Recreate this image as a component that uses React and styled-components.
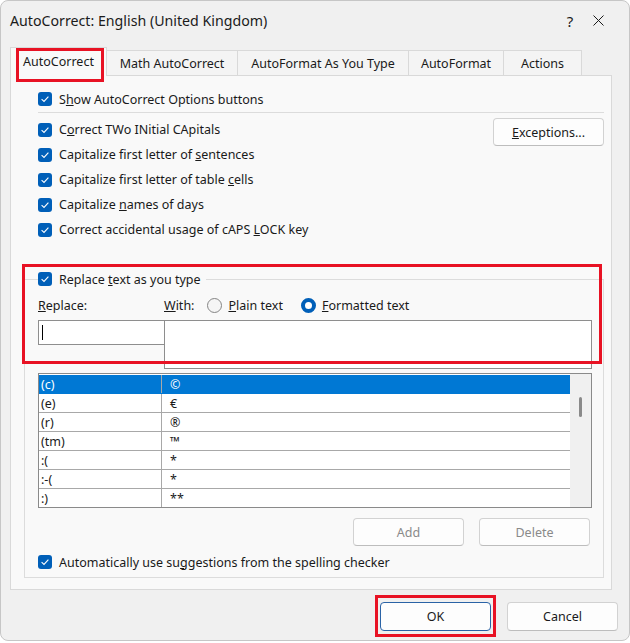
import React from "react";
import styled, { createGlobalStyle } from "styled-components";

const GlobalStyle = createGlobalStyle`
  body {
    margin: 0;
    background: #ffffff;
    font-family: "Noto Sans", "Open Sans", sans-serif;
  }
`;

const Window = styled.div`
  width: 630px;
  height: 641px;
  box-sizing: border-box;
  border: 1px solid #c6c6c6;
  border-radius: 8px;
  background: #f0f0f0;
  display: flex;
  flex-direction: column;
  overflow: hidden;
  color: #1a1a1a;
  font-size: 12.5px;
`;

const TitleBar = styled.div`
  height: 39px;
  display: flex;
  align-items: center;
  padding: 0 21px 0 9px;
`;

const Title = styled.div`
  flex: 1;
  font-size: 14.2px;
  color: #1b1b1b;
`;

const CaptionButton = styled.div`
  width: 20px;
  display: flex;
  justify-content: center;
  align-items: center;
  font-size: 15px;
  margin-left: 8px;
`;

const TabStrip = styled.div`
  display: flex;
  align-items: flex-end;
  height: 27px;
  margin-top: 8px;
  padding-left: 10px;
`;

const Tab = styled.div`
  position: relative;
  width: ${(p) => p.$w}px;
  height: ${(p) => (p.$active ? 29 : 25)}px;
  box-sizing: border-box;
  margin-left: -1px;
  margin-bottom: ${(p) => (p.$active ? -1 : 0)}px;
  z-index: ${(p) => (p.$active ? 2 : 0)};
  border: 1px solid #d9d9d9;
  border-bottom: none;
  background: ${(p) => (p.$active ? "#f9f9f9" : "#f4f4f4")};
  display: flex;
  align-items: center;
  justify-content: center;
  padding-bottom: ${(p) => (p.$active ? 2 : 0)}px;
  white-space: nowrap;
`;

const Mark = styled.div`
  position: absolute;
  box-sizing: border-box;
  border: 3px solid #e81224;
  pointer-events: none;
  z-index: 5;
`;

const Panel = styled.div`
  position: relative;
  margin-left: 9px;
  width: 602px;
  box-sizing: border-box;
  border: 1px solid #d9d9d9;
  background: #f9f9f9;
  padding: 11px 7px 11px 13px;
`;

const TopSection = styled.div`
  padding-left: 14px;
`;

const CheckRow = styled.label`
  display: flex;
  align-items: center;
  height: ${(p) => p.$h || 25}px;
  gap: 7px;
  white-space: nowrap;
`;

const Box = styled.span`
  width: 14px;
  height: 14px;
  border-radius: 3px;
  background: #005fb8;
  display: inline-flex;
  align-items: center;
  justify-content: center;
  flex-shrink: 0;
`;

const Separator = styled.div`
  height: 1px;
  background: #dcdcdc;
  margin: 1px 0 4px;
`;

const Options = styled.div`
  display: grid;
  grid-template-columns: 1fr 111px;
  align-items: start;
`;

const Button = styled.button`
  width: 111px;
  height: ${(p) => p.$h || 28}px;
  box-sizing: border-box;
  border: 1px solid ${(p) => (p.$default ? "#2a63a6" : "#d2d2d2")};
  border-bottom-color: ${(p) => (p.$default ? "#2a63a6" : "#bdbdbd")};
  border-radius: 4px;
  background: #fdfdfd;
  font-family: inherit;
  font-size: 12.5px;
  color: ${(p) => (p.disabled ? "#8a8a8a" : "#1a1a1a")};
  padding: 0;
  margin-top: ${(p) => p.$mt || 0}px;
`;

const Group = styled.fieldset`
  margin: 25px 0 0;
  padding: 0 11px 3px 13px;
  border: 1px solid #dcdcdc;
  min-width: 0;
`;

const Legend = styled.legend`
  padding: 0 5px 0 0;
`;

const LabelRow = styled.div`
  display: flex;
  align-items: center;
  height: 24px;
  margin-top: 2px;
`;

const FieldLabel = styled.span`
  width: ${(p) => p.$w || "auto"};
  flex-shrink: 0;
`;

const Radio = styled.span`
  width: 15px;
  height: 15px;
  box-sizing: border-box;
  border-radius: 50%;
  border: ${(p) => (p.$on ? "4.5px solid #005fb8" : "1px solid #858585")};
  background: ${(p) => (p.$on ? "#ffffff" : "#f5f5f5")};
  margin: 0 6px 0 ${(p) => p.$gap}px;
  flex-shrink: 0;
`;

const InputRow = styled.div`
  display: flex;
  align-items: flex-start;
  margin-top: 3px;
`;

const TextBox = styled.div`
  width: ${(p) => (p.$w ? `${p.$w}px` : "auto")};
  flex: ${(p) => (p.$w ? "none" : 1)};
  height: ${(p) => p.$h}px;
  box-sizing: border-box;
  border: 1px solid #8e8e8e;
  background: #ffffff;
  margin-left: ${(p) => (p.$join ? -1 : 0)}px;
  padding: 4px 3px;
`;

const Caret = styled.div`
  width: 1px;
  height: 15px;
  background: #000000;
`;

const List = styled.div`
  display: flex;
  height: 135px;
  box-sizing: border-box;
  border: 1px solid #8a8a8a;
  background: #ffffff;
  margin-top: 4px;
  overflow: hidden;
`;

const Rows = styled.div`
  flex: 1;
  padding-top: 1px;
`;

const Row = styled.div`
  display: grid;
  grid-template-columns: 123px 1fr;
  height: 19px;
  box-sizing: border-box;
  border-bottom: 1px solid ${(p) => (p.$selected ? "#0078d4" : "#a8a8a8")};
  background: ${(p) => (p.$selected ? "#0078d4" : "#ffffff")};
  color: ${(p) => (p.$selected ? "#ffffff" : "#1a1a1a")};
`;

const Cell = styled.div`
  display: flex;
  align-items: center;
  padding-left: ${(p) => p.$pad}px;
  border-right: ${(p) => (p.$split ? "1px solid #a8a8a8" : "none")};
  white-space: nowrap;
`;

const Scrollbar = styled.div`
  width: 21px;
  background: #f0f0f0;
  padding-top: 23px;
  display: flex;
  justify-content: center;
`;

const Thumb = styled.div`
  width: 3px;
  height: 20px;
  border-radius: 2px;
  background: #8a8a8a;
`;

const ButtonRow = styled.div`
  display: flex;
  justify-content: flex-end;
  gap: 15px;
  margin: 10px 2px 4px 0;
`;

const Footer = styled.div`
  display: flex;
  justify-content: flex-end;
  gap: 16px;
  padding: 12px 11px 0 0;
`;

const Marked = styled.div`
  position: relative;
`;

const Check = () => (
  <Box>
    <svg width="10" height="10" viewBox="0 0 10 10">
      <path d="M1.6 5.2 L4 7.4 L8.4 2.6" fill="none" stroke="#ffffff" strokeWidth="1.1" />
    </svg>
  </Box>
);

const tabs = [
  { label: "AutoCorrect", w: 97, active: true },
  { label: "Math AutoCorrect", w: 132 },
  { label: "AutoFormat As You Type", w: 172 },
  { label: "AutoFormat", w: 96 },
  { label: "Actions", w: 79 },
];

const entries = [
  ["(c)", "©"],
  ["(e)", "€"],
  ["(r)", "®"],
  ["(tm)", "™"],
  [":(", "*"],
  [":-(", "*"],
  [":)", "**"],
];

const App = () => {
  return (
    <Window>
      <GlobalStyle />
      <TitleBar>
        <Title>AutoCorrect: English (United Kingdom)</Title>
        <CaptionButton>?</CaptionButton>
        <CaptionButton>
          <svg width="11" height="11" viewBox="0 0 11 11">
            <path d="M0.5 0.5 L10.5 10.5 M10.5 0.5 L0.5 10.5" stroke="#1a1a1a" strokeWidth="1" />
          </svg>
        </CaptionButton>
      </TitleBar>

      <TabStrip>
        {tabs.map((t) => (
          <Tab key={t.label} $w={t.w} $active={t.active}>
            {t.label}
            {t.active && <Mark style={{ left: 5, top: 0, width: 88, height: 34 }} />}
          </Tab>
        ))}
      </TabStrip>

      <Panel>
        <TopSection>
          <CheckRow $h={24}>
            <Check />
            <span>
              S<u>h</u>ow AutoCorrect Options buttons
            </span>
          </CheckRow>
          <Separator />
          <Options>
            <div>
              <CheckRow>
                <Check />
                <span>
                  C<u>o</u>rrect TWo INitial CApitals
                </span>
              </CheckRow>
              <CheckRow>
                <Check />
                <span>
                  Capitalize first letter of <u>s</u>entences
                </span>
              </CheckRow>
              <CheckRow>
                <Check />
                <span>
                  Capitalize first letter of table <u>c</u>ells
                </span>
              </CheckRow>
              <CheckRow>
                <Check />
                <span>
                  Capitalize <u>n</u>ames of days
                </span>
              </CheckRow>
              <CheckRow>
                <Check />
                <span>
                  Correct accidental usage of cAPS <u>L</u>OCK key
                </span>
              </CheckRow>
            </div>
            <Button $mt={1}>
              <u>E</u>xceptions...
            </Button>
          </Options>
        </TopSection>

        <Group>
          <Legend>
            <CheckRow $h={24}>
              <Check />
              <span>
                Replace <u>t</u>ext as you type
              </span>
            </CheckRow>
          </Legend>
          <LabelRow>
            <FieldLabel $w="126px">
              <u>R</u>eplace:
            </FieldLabel>
            <FieldLabel>
              <u>W</u>ith:
            </FieldLabel>
            <Radio $gap={13} />
            <FieldLabel>
              <u>P</u>lain text
            </FieldLabel>
            <Radio $gap={18} $on />
            <FieldLabel>
              <u>F</u>ormatted text
            </FieldLabel>
          </LabelRow>
          <InputRow>
            <TextBox $w={127} $h={25}>
              <Caret />
            </TextBox>
            <TextBox $h={49} $join />
          </InputRow>
          <List>
            <Rows>
              {entries.map(([from, to], i) => (
                <Row key={from} $selected={i === 0}>
                  <Cell $pad={2} $split>
                    {from}
                  </Cell>
                  <Cell $pad={8}>{to}</Cell>
                </Row>
              ))}
            </Rows>
            <Scrollbar>
              <Thumb />
            </Scrollbar>
          </List>
          <ButtonRow>
            <Button disabled>Add</Button>
            <Button disabled>Delete</Button>
          </ButtonRow>
          <CheckRow $h={24}>
            <Check />
            <span>
              Automatically use su<u>g</u>gestions from the spelling checker
            </span>
          </CheckRow>
        </Group>
        <Mark style={{ left: 11, top: 188, width: 580, height: 100 }} />
      </Panel>

      <Footer>
        <Marked>
          <Button $h={29} $default>
            OK
          </Button>
          <Mark style={{ left: -5, top: -7, right: -5, bottom: -6 }} />
        </Marked>
        <Button $h={29}>Cancel</Button>
      </Footer>
    </Window>
  );
};

export default App;
